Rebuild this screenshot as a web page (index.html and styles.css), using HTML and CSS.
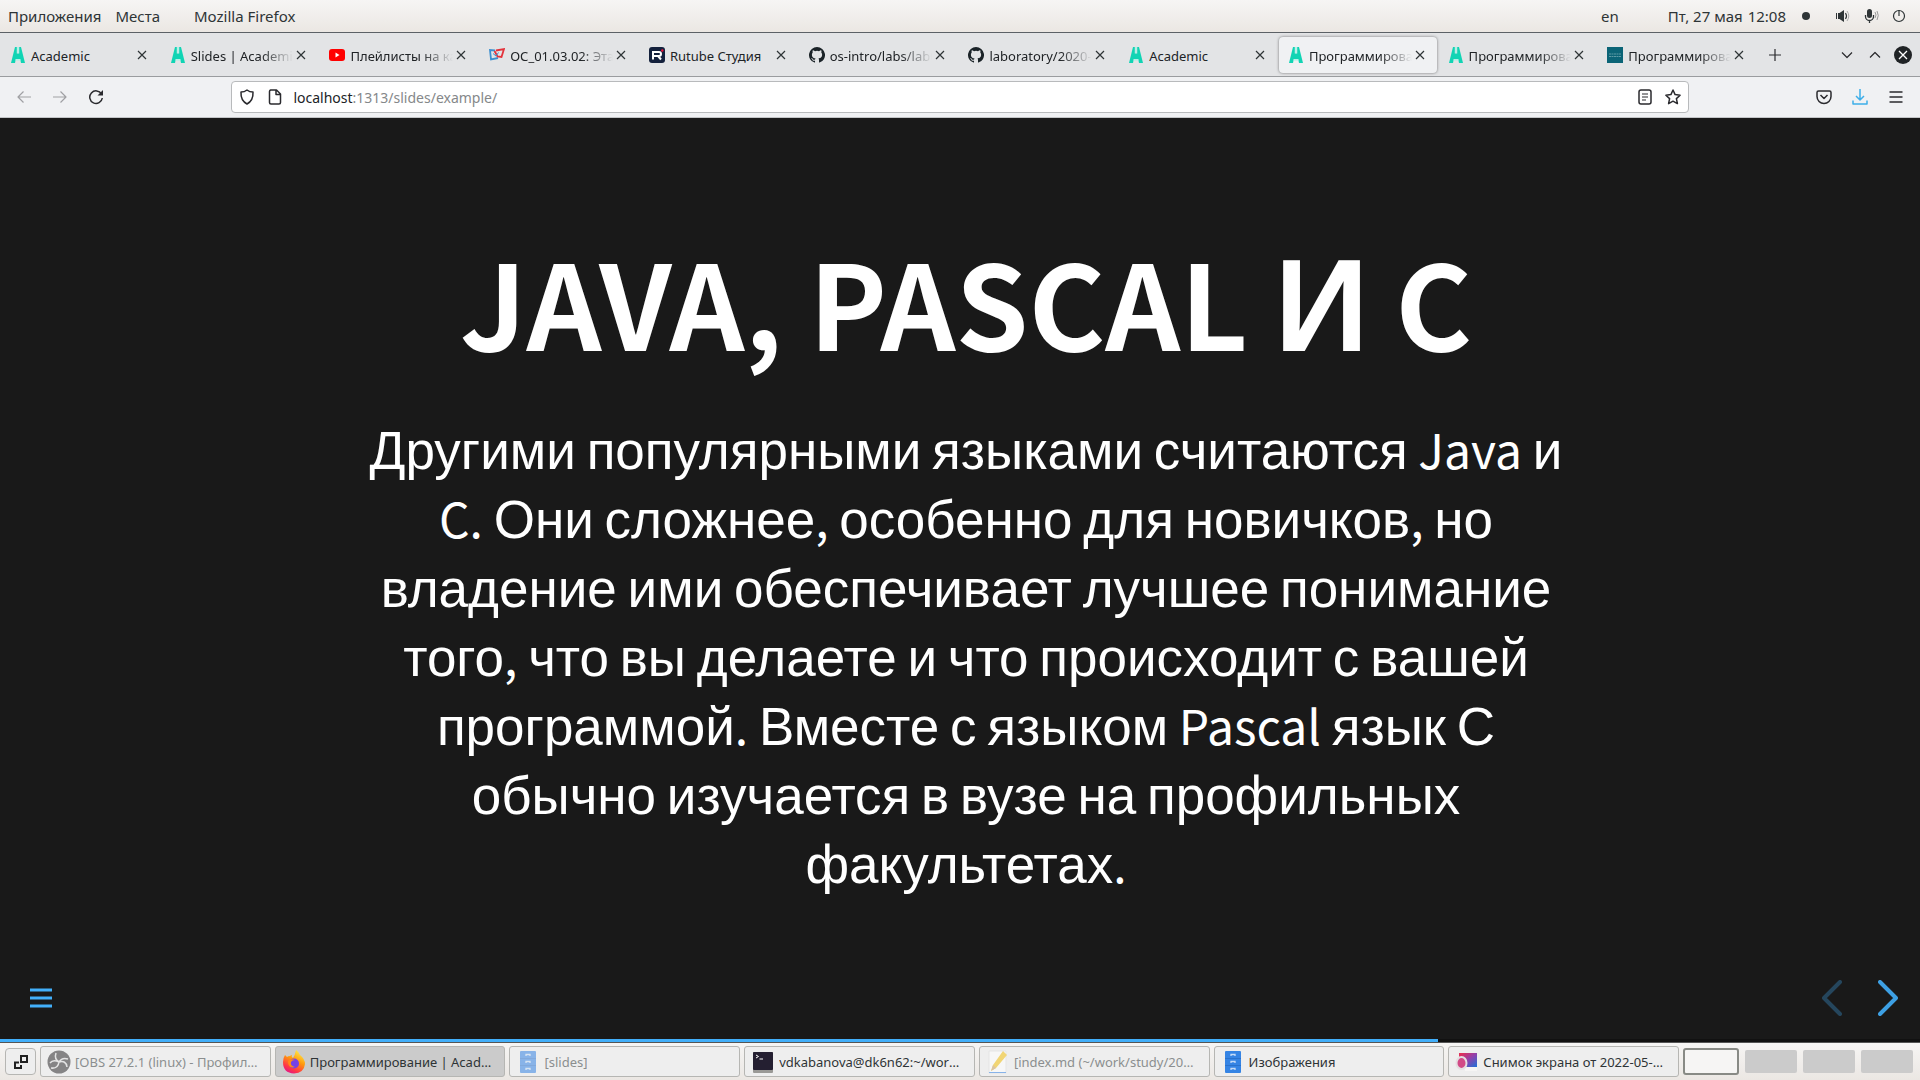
FILE: index.html
```html
<!DOCTYPE html>
<html lang="ru">
<head>
<meta charset="utf-8">
<title>Программирование | Academic</title>
<link rel="stylesheet" href="styles.css">
</head>
<body>
<svg class="defs" aria-hidden="true">
  <symbol id="academic" viewBox="0 0 16 16"><path fill="#11d4b4" d="M5 0h1.800v6.500h2.400V0H11l4 16h-4l-.8-4H5.800L5 16H1z"/><path fill="#a6f3e6" d="M7.300 0h1.400v6H7.300zM5.700 12.200h4.600l.3 1.200H5.400z"/></symbol>
  <symbol id="close" viewBox="0 0 16 16"><path d="M4 4l8 8M12 4l-8 8" fill="none" stroke="#2e3436" stroke-width="1.200"/></symbol>
  <symbol id="github" viewBox="0 0 16 16"><path fill="#1b2328" d="M8 0a8 8 0 0 0-2.530 15.590c.4.070.55-.17.55-.38v-1.490c-2.230.49-2.700-.94-2.700-.94-.36-.92-.89-1.170-.89-1.170-.73-.5.060-.49.060-.49.800.06 1.230.83 1.230.83.710 1.220 1.870.87 2.330.66.070-.52.280-.87.500-1.070-1.780-.2-3.640-.89-3.640-3.950 0-.87.310-1.590.82-2.150-.08-.2-.36-1.020.08-2.120 0 0 .67-.21 2.200.82a7.600 7.600 0 0 1 4 0c1.530-1.040 2.200-.82 2.200-.82.440 1.100.16 1.920.08 2.120.51.560.82 1.270.82 2.150 0 3.070-1.870 3.750-3.650 3.950.29.250.54.730.54 1.480v2.190c0 .21.150.46.550.38A8 8 0 0 0 8 0z"/></symbol>
  <symbol id="drawer" viewBox="0 0 24 24"><rect x="4" y="1" width="16" height="22" rx="1" fill="#3584e4"/><path d="M4 8.500h16M4 15.500h16" stroke="#2a72cc"/><path d="M10 6V4.500h4V6M10 13v-1.500h4V13M10 20v-1.500h4V20" fill="none" stroke="#c6dcf7" stroke-width="1.300"/></symbol>
</svg>

<div class="desktop">
  <header class="panel">
    <nav class="panel-menu"><button>Приложения</button><button>Места</button><button class="app-name">Mozilla Firefox</button></nav>
    <div class="panel-status">
      <span class="lang">en</span>
      <time class="clock"><span>Пт, 27 мая</span><span>12:08</span></time>
      <span class="dot"></span>
      <svg class="sys" viewBox="0 0 16 16"><path d="M1 5v6h1V5zM3 5v6h1.500L9 14V2L4.500 5z" fill="#2e3436"/><path d="M10.500 5q2 3 0 6" fill="none" stroke="#2e3436" stroke-width="1.200"/><path d="M12 3q3.600 5 0 10" fill="none" stroke="#aaa"/></svg>
      <svg class="sys" viewBox="0 0 16 16"><rect x="4" y="1" width="5" height="9" rx="2.500" fill="#2e3436"/><path d="M2.500 7v1.500a4 4 0 0 0 8 0V7M6.500 12v3" fill="none" stroke="#2e3436" stroke-width="1.300"/><path d="M12 4q2 3 0 6M14 3q2.500 4.500 0 9" fill="none" stroke="#999"/></svg>
      <svg class="sys" viewBox="0 0 16 16"><circle cx="8" cy="8" r="5.500" fill="none" stroke="#2e3436" stroke-width="1.200"/><path d="M8 2v6" stroke="#2e3436" stroke-width="1.200"/></svg>
    </div>
  </header>

  <section class="tabbar">
    <div class="tabs">
      <div class="tab"><svg class="fav"><use href="#academic"/></svg><span class="tab-title whole">Academic</span><button class="x" aria-label="Закрыть"><svg><use href="#close"/></svg></button></div>
      <div class="tab"><svg class="fav"><use href="#academic"/></svg><span class="tab-title">Slides | Academic</span><button class="x" aria-label="Закрыть"><svg><use href="#close"/></svg></button></div>
      <div class="tab"><svg class="fav" viewBox="0 0 16 16"><rect y="2" width="16" height="12" rx="3" fill="#f00"/><path d="M6.500 5.500v5l4-2.500z" fill="#fff"/></svg><span class="tab-title">Плейлисты на канале</span><button class="x" aria-label="Закрыть"><svg><use href="#close"/></svg></button></div>
      <div class="tab"><svg class="fav" viewBox="0 0 16 16"><path d="M6 3.500L1 3l1 9.500 7-1.500" fill="none" stroke="#3b8fd0" stroke-width="1.800"/><path d="M7 3.500L15 2l-2.500 8-4-.5L5.500 4" fill="none" stroke="#e3323b" stroke-width="1.800"/><path d="M4 6.500l3 2.500 2.500-3.500" fill="none" stroke="#3b8fd0"/></svg><span class="tab-title">ОС_01.03.02: Этапы</span><button class="x" aria-label="Закрыть"><svg><use href="#close"/></svg></button></div>
      <div class="tab"><svg class="fav" viewBox="0 0 16 16"><rect width="16" height="16" rx="3" fill="#14213d"/><path d="M4 12.500V5h6q2 0 2 2t-2 2H5M9 9l3 3.500" fill="none" stroke="#fff" stroke-width="2"/><circle cx="13.300" cy="3.500" r="1.200" fill="#ed143b"/></svg><span class="tab-title whole">Rutube Студия</span><button class="x" aria-label="Закрыть"><svg><use href="#close"/></svg></button></div>
      <div class="tab"><svg class="fav"><use href="#github"/></svg><span class="tab-title">os-intro/labs/lab07</span><button class="x" aria-label="Закрыть"><svg><use href="#close"/></svg></button></div>
      <div class="tab"><svg class="fav"><use href="#github"/></svg><span class="tab-title">laboratory/2020-2021</span><button class="x" aria-label="Закрыть"><svg><use href="#close"/></svg></button></div>
      <div class="tab"><svg class="fav"><use href="#academic"/></svg><span class="tab-title whole">Academic</span><button class="x" aria-label="Закрыть"><svg><use href="#close"/></svg></button></div>
      <div class="tab active"><svg class="fav"><use href="#academic"/></svg><span class="tab-title">Программирование</span><button class="x" aria-label="Закрыть"><svg><use href="#close"/></svg></button></div>
      <div class="tab"><svg class="fav"><use href="#academic"/></svg><span class="tab-title">Программирование</span><button class="x" aria-label="Закрыть"><svg><use href="#close"/></svg></button></div>
      <div class="tab"><svg class="fav" viewBox="0 0 16 16"><rect width="16" height="16" fill="#0b6477"/><path d="M2 7h12M2 9.500h12" stroke="#5d9aa6" stroke-dasharray="2 .5"/></svg><span class="tab-title">Программирование</span><button class="x" aria-label="Закрыть"><svg><use href="#close"/></svg></button></div>
    </div>
    <button class="ib" aria-label="Новая вкладка"><svg viewBox="0 0 16 16"><path d="M8 2v12M2 8h12" class="ln"/></svg></button>
    <div class="win">
      <button class="ib" aria-label="Свернуть"><svg viewBox="0 0 16 16"><path d="M3 5.500l5 5 5-5" class="ln"/></svg></button>
      <button class="ib" aria-label="Развернуть"><svg viewBox="0 0 16 16"><path d="M3 10.500l5-5 5 5" class="ln"/></svg></button>
      <button class="ib big" aria-label="Закрыть окно"><svg viewBox="0 0 18 18"><circle cx="9" cy="9" r="9" fill="#202326"/><path d="M5 5l8 8M13 5l-8 8" stroke="#fff" stroke-width="1.300"/></svg></button>
    </div>
  </section>

  <section class="toolbar">
    <div class="navs">
      <button class="ib off" aria-label="Назад"><svg viewBox="0 0 16 16"><path d="M15 8H2M7.500 2.500L2 8l5.500 5.500" class="ln"/></svg></button>
      <button class="ib off" aria-label="Вперёд"><svg viewBox="0 0 16 16"><path d="M1 8h13M8.500 2.500L14 8l-5.500 5.500" class="ln"/></svg></button>
      <button class="ib" aria-label="Обновить"><svg viewBox="0 0 16 16"><path d="M13.500 5A6.300 6.300 0 1 0 14.300 9" class="ln thick"/><path d="M15 1v5.500H9.500z" fill="#2a2a2e"/></svg></button>
    </div>
    <div class="urlbar">
      <svg viewBox="0 0 16 16"><path d="M8 1q2.500 2 6 2 .5 8.500-6 12Q1.500 11.500 2 3q3.500 0 6-2z" class="ln thick"/></svg>
      <svg viewBox="0 0 16 16"><path d="M3.500 1h6l4 4v8.500q0 1.500-1.500 1.500H4q-1.500 0-1.500-1.500V2.500Q2.500 1 4 1zM9 1v4.500h4.500" class="ln thick"/></svg>
      <a class="url" href="#"><b>localhost</b>:1313/slides/example/</a>
      <svg viewBox="0 0 16 16"><rect x="2" y="1" width="12" height="14" rx="2" class="ln thick"/><path d="M5 5h6M5 8h6M5 11h4" class="ln"/></svg>
      <svg viewBox="0 0 16 16"><path d="M8 1l2.100 4.600 5 .6-3.700 3.400 1 5L8 12.200l-4.400 2.400 1-5L.9 6.200l5-.6z" class="ln thick"/></svg>
    </div>
    <div class="tools">
      <button class="ib" aria-label="Pocket"><svg viewBox="0 0 16 16"><path d="M2.500 2h11q1.500 0 1.500 1.500V7.500a7 7 0 0 1-14 0V3.500Q1 2 2.500 2zM4.500 6L8 9.500 11.500 6" class="ln thick"/></svg></button>
      <button class="ib" aria-label="Загрузки"><svg viewBox="0 0 16 16"><path d="M8 0v11M4 7l4 4 4-4M1 11.500V15h14v-3.500" class="ln dl"/></svg></button>
      <button class="ib" aria-label="Меню"><svg viewBox="0 0 16 16"><path d="M1.500 3h13M1.500 8h13M1.500 13h13" class="ln thick"/></svg></button>
    </div>
  </section>

  <main class="slide">
    <article class="content">
      <h1>JAVA, PASCAL <span>И</span> C</h1>
      <p><span>Другими</span> <span>популярными</span> <span>языками</span> <span>считаются</span> Java <span>и</span> C. <span>Они</span> <span>сложнее</span>, <span>особенно</span> <span>для</span> <span>новичков</span>, <span>но</span> <span>владение</span> <span>ими</span> <span>обеспечивает</span> <span>лучшее</span> <span>понимание</span> <span>того</span>, <span>что</span> <span>вы</span> <span>делаете</span> <span>и</span> <span>что</span> <span>происходит</span> <span>с</span> <span>вашей</span> <span>программой</span>. <span>Вместе</span> <span>с</span> <span>языком</span> Pascal <span>язык</span> <span>С</span> <span>обычно</span> <span>изучается</span> <span>в</span> <span>вузе</span> <span>на</span> <span>профильных</span> <span>факультетах</span>.</p>
    </article>
    <footer class="controls">
      <button class="burger" aria-label="Меню слайдов"><svg viewBox="0 0 22 20"><path d="M0 2h22M0 10h22M0 18h22" stroke="#42affa" stroke-width="3"/></svg></button>
      <div class="arrows">
        <button class="prev" aria-label="Предыдущий"><svg viewBox="0 0 24 40"><path d="M20 4L4 20l16 16"/></svg></button>
        <button class="next" aria-label="Следующий"><svg viewBox="0 0 24 40"><path d="M4 4l16 16L4 36"/></svg></button>
      </div>
    </footer>
    <div class="progress"><div class="bar" style="width:74.900%"></div></div>
  </main>

  <footer class="taskbar">
    <button class="show" aria-label="Показать рабочий стол"><svg viewBox="0 0 16 16"><path d="M8 2h6v6H8zM6 8.500H2V14h6v-3" fill="none" stroke="#222" stroke-width="2"/></svg></button>
    <div class="tasks">
      <button class="task min"><svg viewBox="0 0 24 24"><circle cx="12" cy="12" r="11.500" fill="#302e31"/><path d="M9 3q-2 6 3 9 7-2 8 5M21 9q-6-2-9 3-1 7-8 6M12 12Q6 9 3 13" fill="none" stroke="#ddd" stroke-width="1.500"/></svg><span>[OBS 27.2.1 (linux) - Профиль: Без имени]</span></button>
      <button class="task current"><svg viewBox="0 0 24 24"><defs><linearGradient id="fx" x1=".8" y1="0" x2=".3" y2="1"><stop offset="0" stop-color="#fff44f"/><stop offset=".45" stop-color="#ff980e"/><stop offset=".8" stop-color="#ff3647"/><stop offset="1" stop-color="#e31587"/></linearGradient></defs><path d="M14 0q3 2 4 5 5 4 5 9-1 9-11 9.500Q1 23 1 12q0-4 2-7l2 2q1-1 3-1 1-1 2-1-1 2 1 3 2-3 3-8z" fill="url(#fx)"/><circle cx="12" cy="13.500" r="5" fill="#7542e5"/><path d="M6 11q3-3 7-1-3 0-4 2-1 4 4 5-7 2-7-6z" fill="#ff8a16"/></svg><span>Программирование | Academic — Mozilla Firefox</span></button>
      <button class="task min"><svg><use href="#drawer"/></svg><span>[slides]</span></button>
      <button class="task"><svg viewBox="0 0 24 24"><rect x="2" y="2" width="20" height="21" rx="1" fill="#9a9996"/><rect x="2" y="2" width="20" height="18" rx="1" fill="#241f31"/><path d="M5 5l2.500 1.500L5 8M8.500 9H12" fill="none" stroke="#fff"/></svg><span>vdkabanova@dk6n62:~/work/study</span></button>
      <button class="task min"><svg viewBox="0 0 24 24"><path d="M3 1h17v22H3z" fill="#fff" stroke="#ddd"/><path d="M3 22.500h17" stroke="#3584e4"/><path d="M5 21l2-6L17 1l4 4L10 18z" fill="#f5c211"/><path d="M5 21l2-6 3 3z" fill="#c9a06a"/></svg><span>[index.md (~/work/study/2021-2022)]</span></button>
      <button class="task"><svg><use href="#drawer"/></svg><span>Изображения</span></button>
      <button class="task"><svg viewBox="0 0 24 24"><defs><linearGradient id="shot" x2="1" y2="1"><stop offset=".1" stop-color="#e0305a"/><stop offset=".5" stop-color="#9141ac"/><stop offset="1" stop-color="#1c71d8"/></linearGradient></defs><rect x="4" y="3" width="18" height="14" fill="url(#shot)"/><rect x="10" y="17" width="12" height="4" fill="#f6f5f4"/><ellipse cx="6.500" cy="13" rx="5" ry="6" fill="#d24a86" stroke="#e4dfe2" stroke-width="2"/></svg><span>Снимок экрана от 2022-05-27 12-07</span></button>
    </div>
    <div class="spaces"><button class="ws on" aria-label="1"></button><button class="ws" aria-label="2"></button><button class="ws" aria-label="3"></button><button class="ws" aria-label="4"></button></div>
  </footer>
</div>
</body>
</html>
```
FILE: styles.css
```css
* { box-sizing: border-box; }
body { margin: 0; font-family: "Noto Sans", sans-serif; font-size: 14px; color: #2e3436; }
button { margin: 0; padding: 0; border: 0; background: none; font: inherit; color: inherit; display: flex; align-items: center; justify-content: center; }
svg { display: block; flex: none; }
.defs { width: 0; height: 0; position: absolute; }
.desktop { min-height: 100vh; display: flex; flex-direction: column; background: #191919; }
.ln { fill: none; stroke: #2a2a2e; stroke-width: 1.2; stroke-linejoin: round; }
.thick { stroke-width: 1.5; }
.dl { stroke: #3daee9; stroke-width: 1.5; }

.panel { height: 33px; display: flex; align-items: center; justify-content: space-between; padding: 0 13px 0 8px; background: linear-gradient(#f6f5f4, #ebe7e3); border-bottom: 1px solid #5c6166; font-size: 15px; }
.panel-menu, .panel-status, .clock { display: flex; align-items: center; }
.panel-menu { gap: 14px; }
.app-name { margin-left: 20px; }
.lang { margin-right: 49px; }
.clock { gap: 5px; }
.dot { width: 8px; height: 8px; border-radius: 50%; background: #2e3436; margin: 0 25px 0 16px; }
.sys { width: 16px; height: 16px; margin-left: 12px; }
.dot + .sys { margin-left: 0; }

.tabbar { height: 44px; display: flex; align-items: center; background: #e3e4e6; border-bottom: 1px solid #9a9c9f; padding-right: 3px; }
.tabs { flex: 1; display: flex; min-width: 0; }
.tab { flex: 1 1 0; min-width: 0; height: 36px; margin: 0 1px; padding: 0 9px; display: flex; align-items: center; border-radius: 4px; font-size: 13px; color: #202326; }
.tab.active { background: #f0f1f3; box-shadow: 0 0 3px rgba(0, 0, 0, .5); }
.fav { width: 16px; height: 16px; margin-right: 5px; }
.tab-title { flex: 1; min-width: 0; padding-top: 2px; overflow: hidden; white-space: nowrap; -webkit-mask-image: linear-gradient(to left, transparent, #000 32px); mask-image: linear-gradient(to left, transparent, #000 32px); }
.tab-title.whole { -webkit-mask-image: none; mask-image: none; }
.x svg { width: 16px; height: 16px; }
.ib { width: 28px; height: 28px; }
.ib svg { width: 16px; height: 16px; }
.ib.big svg { width: 18px; height: 18px; }
.tabbar > .ib { margin-left: 4px; }
.win { display: flex; margin-left: 44px; }

.toolbar { height: 41px; display: flex; align-items: center; background: #f0f1f3; border-bottom: 1px solid #c3c5c7; }
.navs { display: flex; gap: 8px; padding-left: 10px; width: 12%; }
.off { opacity: .4; }
.urlbar { flex: 1; height: 32px; display: flex; align-items: center; gap: 12px; margin: 0 1px; padding: 0 7px; background: #fff; border: 1px solid #b8babc; border-radius: 4px; }
.urlbar svg { width: 16px; height: 16px; }
.url { flex: 1; margin-left: -2px; color: #85888a; text-decoration: none; }
.url b { font-weight: 400; color: #202326; }
.tools { display: flex; gap: 8px; justify-content: flex-end; width: 12%; padding-right: 10px; }

.slide { flex: 1; display: flex; flex-direction: column; background: #191919; color: #fff; font-family: "Noto Sans CJK SC", sans-serif; }
.content { flex: 1; max-width: 1232px; width: 100%; margin: 0 auto; padding: 102px 0 0 12px; text-align: center; }
h1 { margin: 0 0 34px; font-size: 117px; line-height: 160px; font-weight: 600; }
h1 span { font-size: 131px; }
.content span { font-family: "Liberation Sans", sans-serif; line-height: 1; }
.content p { margin: 0; font-size: 48px; line-height: 69px; }
.content p span { font-size: 53px; }
.controls { display: flex; align-items: center; justify-content: space-between; padding: 0 20px 21px 30px; }
.burger svg { width: 22px; height: 20px; }
.arrows { display: flex; gap: 32px; }
.arrows svg { width: 24px; height: 40px; }
.arrows path { fill: none; stroke: #42affa; stroke-width: 4; stroke-linecap: round; stroke-linejoin: round; }
.prev { opacity: .3; }
.next { opacity: .9; }
.progress { height: 3px; background: #111; }
.bar { height: 100%; background: #42affa; }

.taskbar { height: 38px; display: flex; align-items: center; gap: 4px; padding: 0 7px 0 5px; background: linear-gradient(#f6f5f4, #ebe7e3); border-top: 1px solid #555; font-size: 13px; }
.show { width: 31px; height: 27px; border: 1px solid #b6b6b3; border-radius: 4px; background: #eee; }
.show svg { width: 16px; height: 16px; }
.tasks { flex: 1; display: flex; gap: 4px; min-width: 0; }
.task { flex: 1 1 0; min-width: 0; height: 31px; justify-content: flex-start; gap: 4px; padding: 0 11px 0 6px; border: 1px solid #b6b6b3; border-radius: 3px; background: #eee; }
.task svg { width: 24px; height: 24px; }
.task span { padding-top: 1px; overflow: hidden; text-overflow: ellipsis; white-space: nowrap; }
.task.current { background: #cbcbcb; }
.task.min span { color: #8b8e8f; }
.task.min svg { opacity: .55; }
.spaces { display: flex; align-items: center; gap: 6px; }
.ws { width: 52px; height: 23px; border-radius: 2px; background: #cbcbcb; }
.ws.on { width: 56px; height: 27px; border: 2px solid #888a85; background: #f6f5f4; border-radius: 3px; }
```
